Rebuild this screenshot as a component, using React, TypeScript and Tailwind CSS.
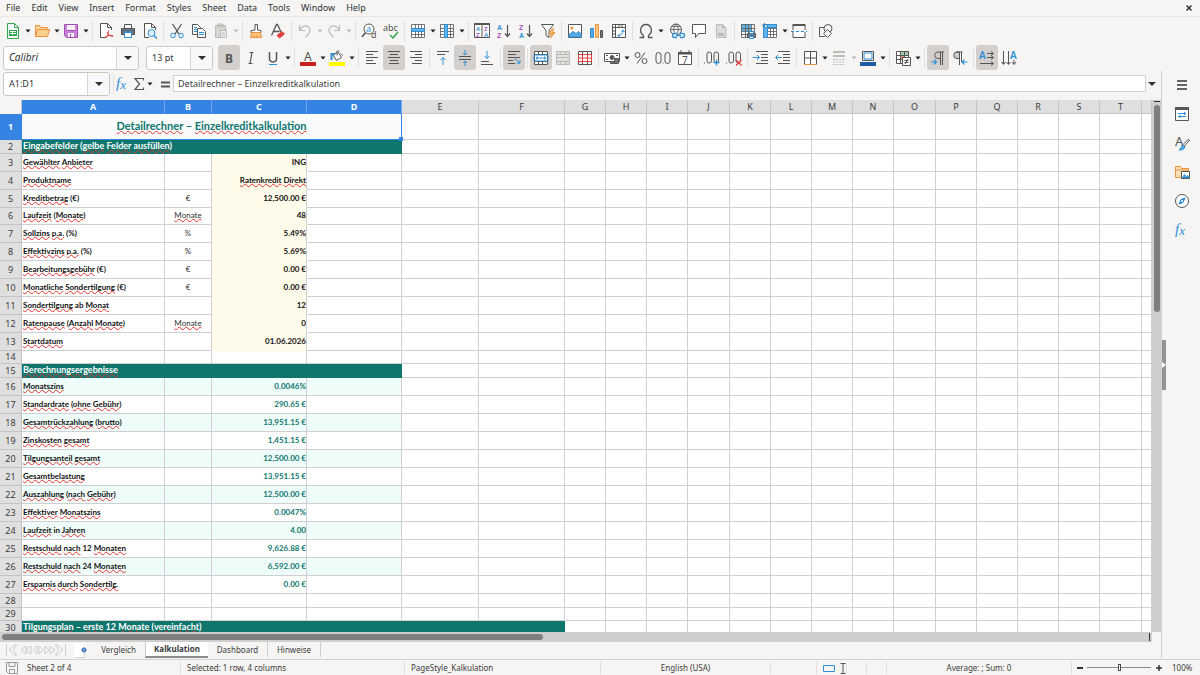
import React from "react";

type Icon = React.ReactNode;

const INK = "#555553";
const BLUE = "#2f8fd6";
const RED = "#e0413e";
const GREEN = "#2fa84f";
const ORANGE = "#ea9340";
const PURPLE = "#a24db5";
const GREY = "#bdbbb8";

const lines = (rows: number[][]) => rows.map(([x1, x2, y], i) => <path key={i} d={`M${x1} ${y}H${x2}`} />);

const sheetGrid = (color: string) => (
  <path stroke={color} strokeWidth="0.8" d="M1.5 1.5h13v13h-13zM1.5 5.5h13M1.5 8.5h13M1.5 11.5h13M5.5 1.5v13M8.5 1.5v13M11.5 1.5v13" />
);

const glyph = (text: string, x: number, y: number, size: number, fill = INK, extra = {}) => (
  <text x={x} y={y} fontSize={size} fill={fill} stroke="none" fontFamily="Noto Sans, sans-serif" {...extra}>
    {text}
  </text>
);

const letter = (text: string, x: number, y: number, size: number, fill: string) =>
  glyph(text, x, y, size, fill, { fontFamily: "Liberation Sans, sans-serif", fontWeight: 700 });

const serifFx = (
  <text x="1" y="12" fontSize="15" fill={BLUE} stroke="none" fontStyle="italic" fontFamily="Liberation Serif, serif">
    f<tspan fontSize="13" dy="1">x</tspan>
  </text>
);

const icons: Record<string, Icon> = {
  new: (
    <>
      <path fill="#fff" stroke={GREEN} d="M2.5.5h7l4 4v11h-11zM9.5.5v4h4" />
      <path fill={GREEN} stroke="none" d="M4 7h8v6H4z" />
      <path stroke="#fff" d="M5 8.5h6M5 10.5h6M7.500 8v4" />
    </>
  ),
  open: (
    <>
      <path fill="#f9d39c" stroke={ORANGE} d="M1.5 13.5v-11h4l1 2h7v3" />
      <path fill="#fbcf8e" stroke={ORANGE} d="M1.5 13.5l2-7h12l-2 7z" />
    </>
  ),
  save: (
    <>
      <path fill="#c884d4" stroke={PURPLE} d="M1.5 1.5h13v13h-11l-2-2z" />
      <path fill="#f7eff9" stroke="none" d="M4 2h8v5H4zM5 10h6v4H5z" />
      <path stroke={PURPLE} d="M4 7.5h8M7.5 11v3" />
    </>
  ),
  pdf: (
    <>
      <path fill="#fff" d="M13.500 7V4.500L9.500.5h-7v14h6M9.500.5v4h4" />
      <path stroke={RED} d="M7 15c3-2 4-5 3.500-7.500M9 9c1 3 3 4 6 4.500M7 14c3-1.500 5-2 8-1.500" />
    </>
  ),
  print: (
    <>
      <path fill="#fff" d="M4.500 5.500v-4h7v4" />
      <path fill="#66727b" d="M1.500 5.500h13v6h-13z" />
      <path fill="#fff" stroke={BLUE} d="M4.500 9.500h7v5h-7z" />
      <path stroke="#3b85ba" d="M4 8h8" />
    </>
  ),
  preview: (
    <>
      <path fill="#fff" d="M7 14.500H2.500V.5h7l4 4V7M9.500.5v4h4" />
      <circle cx="9.500" cy="10" r="3.500" fill="#d9ecfa" stroke={BLUE} />
      <path stroke={BLUE} strokeWidth="1.500" d="M12 12.500l3 3" />
    </>
  ),
  cut: (
    <>
      <path strokeWidth="1.300" d="M3.500 1l6.500 10M12.500 1L6 11" />
      <circle cx="4" cy="12.500" r="2.300" stroke={BLUE} />
      <circle cx="12" cy="12.500" r="2.300" stroke={BLUE} />
    </>
  ),
  copy: (
    <>
      <path fill="#fff" d="M1.500 1.500h5l3 3v7h-8z" />
      <path fill="#fff" d="M6.500 5.500h5l3 3v6h-8z" />
      <path stroke={BLUE} d="M3 4.500h3M3 6.500h3M3 8.500h3M8 9.500h5M8 11.500h5" />
    </>
  ),
  paste: (
    <>
      <path fill="#d8d6d4" stroke={GREY} d="M2.500 2.500h10v12h-10zM5 1h5v3H5z" />
      <path fill="#eee" stroke={GREY} d="M7.500 7.500h6v7h-6zM9 10h3M9 12h3" />
    </>
  ),
  clone: (
    <>
      <path fill="#fff" d="M7 7V1.500h2.500V7l3.500.5v2H3v-2z" />
      <path fill="#fbc77c" stroke={ORANGE} d="M3.500 9.500h9l1 5h-11zM6 12v2M9 12v2" />
    </>
  ),
  clear: (
    <>
      <path strokeWidth="1.300" d="M1.500 12.500L6.500 1.500h1L11 9M3.500 8.500h6" />
      <path fill={RED} stroke={RED} d="M7 12.500l5-4 2.500 2.500-5 4z" />
    </>
  ),
  undo: <path stroke={GREY} strokeWidth="1.200" d="M2.500 2v5.500H8M2.500 7.500C5 2.500 10 1.500 12.500 5c2 3.500-1 6.500-4 9" />,
  redo: <path stroke={GREY} strokeWidth="1.200" d="M13.500 2v5.500H8M13.500 7.500C11 2.500 6 1.500 3.500 5c-2 3.500 1 6.500 4 9" />,
  find: (
    <>
      <circle cx="8" cy="6" r="5" fill="#fff" />
      <path strokeWidth="1.500" d="M4.500 9.500L1 14" />
      {glyph("a", 5, 8.500, 9, BLUE)}
      {glyph("d", 10, 15, 9)}
    </>
  ),
  spell: (
    <>
      {glyph("abc", 0, 8, 9)}
      <path stroke={GREEN} strokeWidth="1.500" d="M7 12l3 3 5-6" />
    </>
  ),
  row: (
    <>
      <path fill="#fff" d="M1.500 1.500h13v13h-13z" stroke="none" />
      {sheetGrid(INK)}
      <path fill="#64b3ea" stroke={BLUE} d="M1.500 5.500h13v3h-13z" />
    </>
  ),
  col: (
    <>
      <path fill="#fff" d="M1.500 1.500h13v13h-13z" stroke="none" />
      {sheetGrid(INK)}
      <path fill="#64b3ea" stroke={BLUE} d="M5.500 1.500h3v13h-3z" />
    </>
  ),
  sort: (
    <>
      <path fill="#fff" d="M.5 1.500h15v13H.5zM8 1v13" />
      <path fill={INK} d="M.5.500h15v1H.5z" />
      {letter("A", 2, 7.500, 6, BLUE)}
      {letter("Z", 2, 14, 6, PURPLE)}
      {letter("Z", 10, 7.500, 6, PURPLE)}
      {letter("A", 10, 14, 6, BLUE)}
    </>
  ),
  az: (
    <>
      {letter("A", 1, 6.500, 7, BLUE)}
      {letter("Z", 1, 15, 7, PURPLE)}
      <path strokeWidth="1.200" d="M11.500 2v11M9 10.500l2.500 3 2.500-3" />
    </>
  ),
  za: (
    <>
      {letter("Z", 1, 6.500, 7, PURPLE)}
      {letter("A", 1, 15, 7, BLUE)}
      <path strokeWidth="1.200" d="M11.500 2v11M9 10.500l2.500 3 2.500-3" />
    </>
  ),
  filter: (
    <>
      <path fill="#fff" d="M1.500 1.500h12l-4.500 6v7l-3-2v-5z" />
      <path fill="#fbc77c" stroke={ORANGE} d="M12 6l-3 5h3l-1.500 4L15 9.500h-3L14 6z" />
    </>
  ),
  image: (
    <>
      <path fill="#fff" d="M1.500 1.500h13v13h-13z" />
      <path fill="#58a9e2" stroke={BLUE} d="M2 14v-2.500l4-3 3 2 2.500-2 3 3V14z" />
      <circle cx="5" cy="5" r="1.500" fill={ORANGE} stroke="none" />
    </>
  ),
  chart: (
    <>
      <path fill="#58a9e2" stroke={BLUE} d="M1.500 5.500h3v9h-3z" />
      <path fill="#fbc77c" stroke={ORANGE} d="M6.500 1.500h3v13h-3z" />
      <path fill="#77746f" d="M11.500 7.500h2v7h-2z" />
    </>
  ),
  pivot: (
    <>
      <path fill="#fff" d="M1.500 1.500h13v13h-13zM1.500 4.500h13M4.500 1.500v13M8 1.500v3M11 1.500v3M1.500 8h3M1.500 11h3" />
      <path stroke={BLUE} d="M7 12.500c3 0 5-2 5-5M10.500 9L12 7l1.500 2M8.500 11L7 12.500 8.500 14" />
    </>
  ),
  omega: <path strokeWidth="1.300" d="M1.500 14.500h4v-2C.5 9 2.500 1.500 8 1.500S15.500 9 10.500 12.500v2h4" />,
  link: (
    <>
      <circle cx="7" cy="6.500" r="5.500" />
      <path strokeWidth="0.800" d="M1.500 6.500h11M7 1c-3 3-3 8 0 11M7 1c3 3 3 8 0 11M2.500 3.500h9" />
      <path fill="#f6f5f4" stroke={BLUE} strokeWidth="1.300" d="M8 10.500H5.500a2 2 0 000 4H8M11 10.500h2.500a2 2 0 010 4H11M7 12.500h5" />
    </>
  ),
  comment: <path fill="#fff" d="M1.500 1.500h13v9h-7l-3 4v-4h-3z" />,
  header: (
    <>
      <path fill="#dedcda" stroke={GREY} d="M3.500 1.500h6l3.500 3.500v9.500H3.500z" />
      <path fill={GREY} stroke="none" d="M5 10h6v3H5zM9 1.500L13 5H9z" />
    </>
  ),
  printArea: (
    <>
      <path fill="#64b3ea" stroke="none" d="M1 1h10v7H1z" />
      {sheetGrid(INK)}
      <path fill="#6c7880" d="M7.500 10.500h8v4h-8z" />
      <path fill="#fff" stroke={BLUE} d="M9.500 8.500h4v2h-4zM9.500 13.500h4v2h-4z" />
    </>
  ),
  freeze: (
    <>
      <path fill="#fff" stroke="none" d="M2 1h13v13H2z" />
      {sheetGrid(INK)}
      <path fill="#64b3ea" stroke={BLUE} d="M1.500 4.500h4v10h-4zM5.500 1.500h9v3h-9z" />
      <path stroke={BLUE} d="M0 2h5M2.500 0v5" />
    </>
  ),
  split: (
    <>
      <path fill="#fff" d="M2 1.500h12V7M2 1.500V7M2 9v5.500h12V9" />
      <path fill={INK} d="M2 1.500h12v1H2z" />
      <path stroke={BLUE} strokeDasharray="3 2" d="M0 8.500h16" />
    </>
  ),
  shapes: (
    <>
      <path d="M7 13.500H1.500v-9H6" />
      <circle cx="10" cy="5.500" r="4" />
      <path fill="#f6f5f4" d="M9.500 6.500l4 4-4 4-4-4z" />
    </>
  ),
  bold: glyph("B", 4, 13, 12, INK, { fontWeight: 700 }),
  italic: <path strokeWidth="1.200" d="M6.500 2.500h4M5.500 13.500h4M9 2.500l-2 11" />,
  underline: (
    <>
      <path strokeWidth="1.500" d="M4.500 2v6.500c0 4.500 7 4.500 7 0V2" />
      <path stroke={BLUE} d="M4 14.500h8" />
    </>
  ),
  fontColor: (
    <>
      {glyph("A", 4, 11, 12, INK)}
      <path fill="#c9211e" stroke="none" d="M0 12h16v4H0z" />
    </>
  ),
  highlight: (
    <>
      <path fill="#ff0" stroke="none" d="M0 12h16v4H0z" />
      <path fill="#fff" d="M4 5l5-3 3.500 5.500-5 3z" />
      <path d="M8 5.500V1.500c0-1 2-1 2 0M12 3.500l1.500 2" />
      <path stroke={BLUE} strokeWidth="2" d="M2.500 10V4H6" />
    </>
  ),
  alignLeft: <>{lines([[2, 14, 1.5], [2, 9, 4.5], [2, 14, 7.5], [2, 9, 10.5], [2, 12, 13.5]])}</>,
  alignCenter: <>{lines([[2, 14, 1.5], [4, 12, 4.5], [2, 14, 7.5], [4, 12, 10.5], [3, 13, 13.5]])}</>,
  alignRight: <>{lines([[2, 14, 1.5], [7, 14, 4.5], [2, 14, 7.5], [7, 14, 10.5], [4, 14, 13.5]])}</>,
  top: (
    <>
      {lines([[2, 14, 1.5], [2, 10, 4.5]])}
      <path stroke={BLUE} d="M8 15V7.500M5.500 10L8 7.500l2.500 2.500" />
    </>
  ),
  middle: (
    <>
      {lines([[2, 14, 6.5], [2, 14, 9.5]])}
      <path stroke={BLUE} d="M8 0v5M6 3l2 2 2-2M8 16v-5M6 13l2-2 2 2" />
    </>
  ),
  bottom: (
    <>
      {lines([[2, 10, 11.5], [2, 14, 14.5]])}
      <path stroke={BLUE} d="M8 1v7.500M5.500 6L8 8.500 10.500 6" />
    </>
  ),
  wrap: (
    <>
      {lines([[2, 14, 1.5], [2, 10, 4.5], [2, 14, 7.5], [2, 7, 10.5], [2, 9, 13.5]])}
      <path stroke={BLUE} d="M8 9.500c3 0 4 1 5.500 4M10.500 13h3.500v-3" />
    </>
  ),
  merge: (
    <>
      <path fill="#fff" d="M1.500 1.500h13v13h-13zM1.500 4.500h13M1.500 11.500h13M5.500 1.500v3M9.500 1.500v3M5.500 11.500v3M9.500 11.500v3" />
      <path stroke={BLUE} d="M1 5h14v6H1zM3 8h10M5 6.500L3 8l2 1.500M11 6.500L13 8l-2 1.500" />
    </>
  ),
  mergeOff: (
    <path fill="#e3e1df" stroke={GREY} d="M1.500 1.500h13v13h-13zM1.500 4.500h13M1.500 7.500h13M1.500 11.500h13M5.500 1.500v3M10.500 1.500v3M5.500 11.500v3M10.500 11.500v3" />
  ),
  unmerge: (
    <>
      <path fill="#fff" d="M1.500 1.500h13v13h-13zM5.500 1.500v3M10.500 1.500v3M5.500 11.500v3M10.500 11.500v3" />
      <path stroke={RED} d="M1.500 4.500h13v7h-13zM5.500 4.500v7M10.500 4.500v7M1.500 8h13" />
    </>
  ),
  currency: (
    <>
      <path fill="#fff" d="M.5 3.500h15v8H.5z" />
      <circle cx="8" cy="7.500" r="2" fill={INK} />
      <path d="M2 5.500h2M12 5.500h2M2 9.500h2" />
      <path fill="#77746f" d="M10.500 8.500h4v5h-4zM6.500 11.500h4v2h-4z" />
    </>
  ),
  percent: (
    <>
      <circle cx="4.500" cy="5" r="2.500" />
      <circle cx="11.500" cy="11" r="2.500" />
      <path d="M12 2.500l-8 11" />
    </>
  ),
  number: (
    <>
      <rect x="1" y="2.500" width="5" height="11" rx="2.500" />
      <rect x="10" y="2.500" width="5" height="11" rx="2.500" />
      <path d="M8 12.500v1" />
    </>
  ),
  date: (
    <>
      <path fill="#fff" d="M1.500 2.500h13v12h-13z" />
      <path fill={INK} d="M1.500 2.500h13v1.500h-13zM4 0v3M12 0v3" />
      {glyph("7", 5, 13.500, 10)}
    </>
  ),
  addDecimal: (
    <>
      <path d="M.5 12.500v1" />
      <rect x="3" y="2" width="4.500" height="11" rx="2.200" />
      <rect x="10" y="2" width="4.500" height="11" rx="2.200" />
      <path stroke={BLUE} strokeWidth="1.300" d="M9.500 12.500h6M12.500 9.500v6" />
    </>
  ),
  delDecimal: (
    <>
      <path d="M.5 12.500v1" />
      <rect x="3" y="2" width="4.500" height="11" rx="2.200" />
      <rect x="10" y="2" width="4.500" height="11" rx="2.200" />
      <path stroke={RED} strokeWidth="1.300" d="M10 10l5.500 5.500M15.500 10L10 15.500" />
    </>
  ),
  indent: (
    <>
      {lines([[3, 15, 1.5], [8, 15, 4.5], [8, 15, 7.5], [8, 15, 10.5], [3, 15, 13.5]])}
      <path stroke={BLUE} d="M0 7.500h6.500M4 5l2.500 2.500L4 10" />
    </>
  ),
  outdent: (
    <>
      {lines([[3, 15, 1.5], [8, 15, 4.5], [8, 15, 7.5], [8, 15, 10.5], [3, 15, 13.5]])}
      <path stroke={BLUE} d="M7 7.500H.5M3 5L.5 7.500 3 10" />
    </>
  ),
  borders: (
    <>
      <path fill="#fff" d="M2.500 1.500h12v13h-12zM2.500 8h12M8.500 1.500v13" />
      <path stroke={ORANGE} d="M2 14.500h13" />
    </>
  ),
  lineStyle: (
    <>
      <path stroke={GREY} strokeWidth="2" d="M2 2h12M2 6h12" />
      <path stroke={GREY} strokeDasharray="2 1" d="M2 9.500h12M2 12h12M2 14.500h12" />
    </>
  ),
  lineColor: (
    <>
      <path fill="#fff" d="M2.500 1.500h11v9h-11z" />
      <path stroke={BLUE} d="M4 3h8v6H4z" />
      <path fill="#1f5da8" stroke="none" d="M0 12h16v4H0z" />
    </>
  ),
  condFormat: (
    <>
      <path fill="#fff" stroke="none" d="M1 1h13v13H1z" />
      <path fill="#9bd3a4" stroke="none" d="M5 1h9v4H5z" />
      <path fill="#ee8581" stroke="none" d="M5 5h5v4H5z" />
      <path d="M1.500 1.500h12v12h-12zM1.500 5.500h12M1.500 9.500h12M5.500 1.500v12M9.500 1.500v12" />
      <path fill="#fff" d="M7.500 7.500h8v8h-8zM9.500 10.500h4M9.500 12.500h4M13 9l-3 5" />
    </>
  ),
  ltr: (
    <>
      <path d="M14 2H8a3 3 0 000 6.500h2M10.500 2v13M12.500 2v13" />
      <path stroke={BLUE} strokeWidth="1.200" d="M1 12h5.500M4 9.500L6.500 12 4 14.500" />
    </>
  ),
  rtl: (
    <>
      <path fill="#cfcdca" d="M8 2H5a3 3 0 000 6.500h2" />
      <path d="M4 2h6.500M7.500 2v13M9.500 2v10" />
      <path stroke={BLUE} strokeWidth="1.200" d="M15.500 12H10M12.500 9.500L10 12l2.500 2.500" />
    </>
  ),
  textHoriz: (
    <>
      {glyph("A", 0, 9, 10, BLUE, { fontWeight: 600 })}
      <path d="M8 3.500h6M8 7.500h6M1 13.500h13M12 1.500l2.500 2-2.500 2M12 5.500l2.500 2-2.500 2M12 11.500l2.500 2-2.500 2" />
    </>
  ),
  textVert: (
    <>
      {glyph("A", 9, 9, 10, BLUE, { fontWeight: 600 })}
      <path d="M2.500 1v13M7.500 1v13M13 10v4M.5 12l2 2.500 2-2.500M5.500 12l2 2.500 2-2.500M11 12l2 2.500 2-2.500" />
    </>
  ),
  fx: serifFx,
  sigma: <path strokeWidth="1.200" d="M12.500 4.500v-2H4l4.500 5.500L4 13.500h8.500v-2" />,
  equals: <path strokeWidth="1.800" d="M4 6.500h9M4 10.500h9" />,
  menu: <path stroke="#2e3436" strokeWidth="1.500" d="M3 4h10M3 8h10M3 12h10" />,
  properties: (
    <>
      <path fill="#fff" d="M1.500 1.500h13v13h-13z" />
      <path fill={INK} d="M1.500 1.500h13v2h-13z" />
      <path stroke={BLUE} d="M4 7.500h8M4 10.500h8M10.500 6v3M6 9v3" />
    </>
  ),
  stylesPane: (
    <>
      {glyph("A", 1, 11, 13)}
      <path fill="#fff" d="M15.500 5l-5 6-1.500-1.500L14 4.500z" />
      <path fill="#58a9e2" stroke={BLUE} d="M9 10l2 2c-1 3-4 3-6 3 2-1 2-4 4-5z" />
    </>
  ),
  gallery: (
    <>
      <path fill="#fbe0b8" stroke={ORANGE} d="M1.500 13.500v-11h5l1 2h7v9zM1.500 6h13" />
      <path fill="#fff" d="M7.500 7.500h8v7h-8z" />
      <path fill="#58a9e2" stroke={BLUE} d="M8.500 13.500l2-3 2 2 1-1 1.500 2z" />
    </>
  ),
  navigator: (
    <>
      <circle cx="8" cy="8" r="6.500" fill="#fff" />
      <path fill={BLUE} stroke={BLUE} d="M11 5L9 9.500 5 11l2-4.500z" />
      <circle cx="8" cy="8" r="1" fill="#fff" stroke="none" />
    </>
  ),
  saved: <path stroke="#9a9996" d="M2.500 2.500h11v11h-9l-2-2zM5 2.500v4h6v-4M5.500 13.500v-4h5v4" />,
  addSheet: (
    <>
      <path fill="#fff" stroke="none" d="M1 1h10v14H1z" />
      <path stroke="#d5d3d0" d="M11.500 11v4.500H2" />
      <circle cx="11" cy="8" r="2" fill="#fff" stroke="#2a62b8" />
      <path stroke="#2a62b8" strokeWidth="0.800" d="M11 5.500v5M8.500 8h5" />
    </>
  ),
  selection: <path stroke={BLUE} d="M2.500 5.500h11v6h-11z" />,
  cursor: <path stroke={INK} d="M3.500 3.500h5M3.500 13.500h5M6 3.500v10" />,
};

function Glyph({ name }: { name: string }) {
  return (
    <svg viewBox="0 0 16 16" className="size-4 shrink-0 overflow-visible" fill="none" stroke={INK} aria-hidden="true">
      {icons[name]}
    </svg>
  );
}

function Caret({ faded = false }: { faded?: boolean }) {
  return (
    <svg viewBox="0 0 6 4" className="h-1 w-1.5" fill={faded ? GREY : "#1c1c1c"} aria-hidden="true">
      <path d="M.5.500h5L3 3.500z" />
    </svg>
  );
}

// "|" is a separator, "_" a small gap, a trailing "*" marks a toggled button, "+" a drop-down, "-" a disabled drop-down
const STANDARD_BAR = "new+ open+ save+ | pdf print preview | cut copy paste- | clone clear | undo- redo- | find spell | row+ col+ | sort az za filter | image chart pivot | omega+ _ link comment header | printArea freeze+ split | shapes";
const FORMAT_BAR = "bold* italic underline+ | fontColor+ highlight+ | alignLeft alignCenter* alignRight | top middle* bottom | wrap* | merge* mergeOff unmerge | currency+ percent number date | addDecimal delDecimal | indent outdent | borders+ lineStyle- lineColor+ | condFormat+ | ltr* rtl | textHoriz* textVert";

function Tools({ spec }: { spec: string }) {
  const items = spec.split(" ");
  return (
    <>
      {items.map((item, i) => {
        if (item === "_") return <span key={i} className="w-0.5 shrink-0" />;
        if (item === "|") {
          const wide = /[+-]$/.test(items[i - 1]);
          return (
            <span key={i} className={`flex h-5 shrink-0 justify-center ${wide ? "w-1.5" : "w-[5px]"}`}>
              <span className="w-px bg-[#e2e0de]" />
            </span>
          );
        }
        const name = item.replace(/[*+-]$/, "");
        const active = item.endsWith("*");
        return (
          <span key={i} className="flex shrink-0">
            <button
              aria-label={name}
              aria-pressed={active}
              className={`flex h-[25px] w-[22px] items-center justify-center rounded-[3px] ${active ? "bg-[#d2cfcc]" : ""}`}
            >
              <Glyph name={name} />
            </button>
            {/[+-]$/.test(item) && (
              <button aria-label={`${name} options`} className="flex w-[7px] items-center justify-center">
                <Caret faded={item.endsWith("-")} />
              </button>
            )}
          </span>
        );
      })}
    </>
  );
}

function Combo({ label, value, className = "", inputClass = "" }: { label: string; value: string; className?: string; inputClass?: string }) {
  return (
    <div className={`flex h-6 shrink-0 overflow-hidden rounded-[3px] border border-[#cdc7c2] bg-white ${className}`}>
      <input aria-label={label} defaultValue={value} className={`min-w-0 flex-1 px-[5px] outline-none ${inputClass}`} />
      <button aria-label={`${label} list`} className="flex w-[22px] items-center justify-center border-l border-[#d8d4d0] bg-[#f9f8f8]">
        <svg viewBox="0 0 8 4" className="h-1 w-2" fill="#2e3436" aria-hidden="true">
          <path d="M0 0h8L4 4z" />
        </svg>
      </button>
    </div>
  );
}

const MENUS = ["File", "Edit", "View", "Insert", "Format", "Styles", "Sheet", "Data", "Tools", "Window", "Help"];

const COLUMNS: [string, string][] = [
  ["A", "w-[143px]"], ["B", "w-[47px]"], ["C", "w-[95px]"], ["D", "w-[95px]"], ["E", "w-[77px]"], ["F", "w-[86px]"],
  ["G", "w-[41px]"], ["H", "w-[41px]"], ["I", "w-[41px]"], ["J", "w-[42px]"], ["K", "w-[41px]"], ["L", "w-[41px]"],
  ["M", "w-[41px]"], ["N", "w-[41px]"], ["O", "w-[42px]"], ["P", "w-[41px]"], ["Q", "w-[41px]"], ["R", "w-[41px]"],
  ["S", "w-[41px]"], ["T", "w-[42px]"], ["", ""],
];

type Row = { kind: "title" | "band" | "input" | "result" | "empty"; label?: string; unit?: string; value?: string; height: string; span?: number };

const input = (label: string, value: string, unit = "", height = "h-[18px]"): Row => ({ kind: "input", label, value, unit, height });
const result = (label: string, value: string): Row => ({ kind: "result", label, value, height: "h-[18px]" });

const ROWS: Row[] = [
  { kind: "title", label: "Detailrechner – Einzelkreditkalkulation", height: "h-[26px]", span: 4 },
  { kind: "band", label: "Eingabefelder (gelbe Felder ausfüllen)", height: "h-[14px]", span: 4 },
  input("Gewählter Anbieter", "ING"),
  input("Produktname", "Ratenkredit Direkt"),
  input("Kreditbetrag (€)", "12,500.00 €", "€"),
  input("Laufzeit (Monate)", "48", "Monate", "h-[17px]"),
  input("Sollzins p.a. (%)", "5.49%", "%"),
  input("Effektivzins p.a. (%)", "5.69%", "%"),
  input("Bearbeitungsgebühr (€)", "0.00 €", "€"),
  input("Monatliche Sondertilgung (€)", "0.00 €", "€"),
  input("Sondertilgung ab Monat", "12"),
  input("Ratenpause (Anzahl Monate)", "0", "Monate"),
  input("Startdatum", "01.06.2026"),
  { kind: "empty", height: "h-[13px]" },
  { kind: "band", label: "Berechnungsergebnisse", height: "h-[14px]", span: 4 },
  result("Monatszins", "0.0046%"),
  result("Standardrate (ohne Gebühr)", "290.65 €"),
  result("Gesamtrückzahlung (brutto)", "13,951.15 €"),
  result("Zinskosten gesamt", "1,451.15 €"),
  result("Tilgungsanteil gesamt", "12,500.00 €"),
  result("Gesamtbelastung", "13,951.15 €"),
  result("Auszahlung (nach Gebühr)", "12,500.00 €"),
  result("Effektiver Monatszins", "0.0047%"),
  result("Laufzeit in Jahren", "4.00"),
  result("Restschuld nach 12 Monaten", "9,626.88 €"),
  result("Restschuld nach 24 Monaten", "6,592.00 €"),
  result("Ersparnis durch Sondertilg.", "0.00 €"),
  { kind: "empty", height: "h-[14px]" },
  { kind: "empty", height: "h-[13px]" },
  { kind: "band", label: "Tilgungsplan – erste 12 Monate (vereinfacht)", height: "h-[14px]", span: 6 },
];

// Red wavy line under every word the spell checker does not know
function Spelled({ text }: { text: string }) {
  return (
    <>
      {text.split(/([\p{L}.]{3,})/u).map((part, i) =>
        i % 2 && part !== "ING" ? (
          <span key={i} className="underline decoration-[#e5322d] decoration-wavy decoration-1 underline-offset-0 [text-decoration-skip-ink:none]">
            {part}
          </span>
        ) : (
          part
        ),
      )}
    </>
  );
}

const CELL = "overflow-hidden whitespace-nowrap border-r border-b border-[#d0d0d0] p-0";
const DATA = "pb-0.5 font-[Lato] text-[8px] leading-3";

function SheetRow({ row, index }: { row: Row; index: number }) {
  const n = index + 1;
  const rest = COLUMNS.slice(row.span ?? 4);
  const mint = row.kind === "result" && n % 2 === 0 ? "bg-[#eefdfa]" : "";
  return (
    <tr className={row.height}>
      <th
        scope="row"
        className={`border-r border-b p-0 text-[9px] leading-3 ${n === 1 ? "border-[#3584e4] bg-[#3584e4] font-bold text-white" : "border-[#c4c4c4] bg-[#dfdfdf] font-normal text-[#3b3b3b]"}`}
      >
        {n}
      </th>
      {row.kind === "title" && (
        <td colSpan={4} className="relative border-r border-b border-[#3584e4] bg-[#f8fafc] p-0 pb-0.5 text-center font-[Lato] text-[11px] leading-4 font-bold text-[#0f766e]">
          <Spelled text={row.label!} />
          <span className="absolute -right-0.5 -bottom-0.5 size-1 bg-[#3584e4]" />
        </td>
      )}
      {row.kind === "band" && (
        <td colSpan={row.span} className="overflow-hidden border-r border-[#0f766e] bg-[#0f766e] p-0 pb-0.5 pl-px font-[Lato] text-[9px] leading-3 font-bold whitespace-nowrap text-white">
          <Spelled text={row.label!} />
        </td>
      )}
      {row.kind === "empty" && COLUMNS.slice(0, 4).map(([name]) => <td key={name} className={CELL} />)}
      {(row.kind === "input" || row.kind === "result") && (
        <>
          <td className={`${CELL} ${DATA} ${mint} pl-px font-bold text-[#111]`}>
            <Spelled text={row.label!} />
          </td>
          <td className={`${CELL} ${DATA} ${mint} text-center text-[#333]`}>
            <Spelled text={row.unit ?? ""} />
          </td>
          <td
            className={`${CELL} ${DATA} text-right font-bold ${row.kind === "input" ? "border-b-[#fefce8] bg-[#fffbeb] text-[#111]" : `${mint} text-[#0f766e]`}`}
          >
            <Spelled text={row.value!} />
          </td>
          <td className={`${CELL} ${mint}`} />
        </>
      )}
      {rest.map(([name]) => (
        <td key={name} className={CELL} />
      ))}
    </tr>
  );
}

function Sheet() {
  return (
    <table className="w-full table-fixed border-separate border-spacing-0 bg-white">
      <thead>
        <tr className="h-[14px]">
          <th className="w-[22px] border-r border-[#c4c4c4] bg-[#f6f5f4] p-0" />
          {COLUMNS.map(([name, width], i) => (
            <th
              key={name}
              scope="col"
              className={`${width} border-r border-b p-0 text-[9px] leading-3 ${i < 4 ? "border-[#3584e4] border-r-[#6da5ea] bg-[#3584e4] font-bold text-white" : "border-[#c4c4c4] bg-[#dfdfdf] font-normal text-[#3b3b3b]"}`}
            >
              {name}
            </th>
          ))}
        </tr>
      </thead>
      <tbody>
        {ROWS.map((row, i) => (
          <SheetRow key={i} row={row} index={i} />
        ))}
      </tbody>
    </table>
  );
}

function FormulaBar() {
  return (
    <div className="flex h-[29px] shrink-0 items-center pr-[3px] pb-1 pl-[3px]">
      <Combo label="Name Box" value="A1:D1" className="w-[107px] text-[9px]" />
      <span className="mr-px ml-[3px] h-5 w-px bg-[#e2e0de]" />
      <button aria-label="Function Wizard"><Glyph name="fx" /></button>
      <button aria-label="Select Function" className="flex items-center"><Glyph name="sigma" /><Caret /></button>
      <button aria-label="Formula" className="ml-1"><Glyph name="equals" /></button>
      <input
        aria-label="Input line"
        defaultValue="Detailrechner – Einzelkreditkalkulation"
        className="h-[17px] min-w-0 flex-1 border border-[#d4d0cc] bg-white px-1 text-[9px] text-[#3b3b3b] outline-none"
      />
      <button aria-label="Expand Formula Bar" className="flex w-3 justify-center">
        <svg viewBox="0 0 8 4" className="h-1 w-2" fill="#2e3436" aria-hidden="true">
          <path d="M0 0h8L4 4z" />
        </svg>
      </button>
    </div>
  );
}

function SheetTabs() {
  const tab = "h-[15px] text-center leading-[15px]";
  return (
    <div className="flex h-[17px] shrink-0 items-start text-[8px] text-[#3b3b3b]">
      <button aria-label="Scroll sheets" className="ml-[5px] flex">
        <svg viewBox="0 0 62 14" className="mt-px h-3.5 w-[62px]" fill="none" stroke="#cfcdca" aria-hidden="true">
          <path d="M1.500 1v12M4 7l7-6v3L8 7l3 3v3zM16 7l5-4v8zM21 7l5-4v8zM28 7l4-4v8zM34 3l4 4-4 4zM40 3l4 4-4 4zM45 3l5 4-5 4zM51 1l7 6-7 6v-3l3-3-3-3zM60.500 1v12" />
        </svg>
      </button>
      <button aria-label="Add sheet" className="ml-1.5 w-[19px]"><Glyph name="addSheet" /></button>
      <button className={`${tab} w-[53px]`}>Vergleich</button>
      <button className="h-4 w-[63px] border-b-2 border-l border-b-[#8b8b8b] border-l-[#cfcdca] bg-white text-center leading-[14px] font-bold">Kalkulation</button>
      <button className={`${tab} w-[60px] border-r border-[#cfcdca]`}>Dashboard</button>
      <button className={`${tab} w-[53px] border-r border-[#cfcdca]`}>Hinweise</button>
    </div>
  );
}

function StatusBar() {
  const cell = "flex h-3 items-center border-l border-[#e0dedb]";
  return (
    <footer className="flex h-4 shrink-0 items-center border-t border-[#d4d1ce] text-[8px] text-[#3b3b3b]">
      <span className="ml-1 w-[23px]"><Glyph name="saved" /></span>
      <span className="w-[153px]">Sheet 2 of 4</span>
      <span className={`${cell} w-56 pl-1.5`}>Selected: 1 row, 4 columns</span>
      <span className={`${cell} w-[196px] pl-1.5`}>PageStyle_Kalkulation</span>
      <span className={`${cell} w-[170px] justify-center`}>English (USA)</span>
      <span className={`${cell} w-[46px]`} />
      <span className={`${cell} w-[30px] pl-1`}><Glyph name="selection" /><Glyph name="cursor" /></span>
      <span className={`${cell} w-5`} />
      <span className={`${cell} w-5`} />
      <span className={`${cell} flex-1 justify-center`}>Average: ; Sum: 0</span>
      <span className={`${cell} w-[97px] justify-center gap-1`}>
        <button aria-label="Zoom out" className="h-0.5 w-1.5 bg-[#2e3436]" />
        <input
          type="range"
          aria-label="Zoom"
          className="h-2 w-16 appearance-none bg-transparent [&::-webkit-slider-runnable-track]:h-px [&::-webkit-slider-runnable-track]:bg-[#8b8b8b] [&::-webkit-slider-thumb]:-mt-[3px] [&::-webkit-slider-thumb]:h-[7px] [&::-webkit-slider-thumb]:w-[3px] [&::-webkit-slider-thumb]:appearance-none [&::-webkit-slider-thumb]:border [&::-webkit-slider-thumb]:border-[#4a4a48] [&::-webkit-slider-thumb]:bg-white"
        />
        <button aria-label="Zoom in">
          <svg viewBox="0 0 8 8" className="size-2" stroke="#2e3436" strokeWidth="1.500" aria-hidden="true">
            <path d="M1 4h6M4 1v6" />
          </svg>
        </button>
      </span>
      <span className="w-8 pl-1">100%</span>
    </footer>
  );
}

export default function App() {
  return (
    <div className="flex h-screen flex-col overflow-hidden bg-[#f6f5f4] font-['Noto_Sans',sans-serif] text-[#2e3436]">
      <nav className="flex h-[17px] shrink-0 items-center gap-px border-b border-[#e8e6e4] pl-px text-[9px]">
        {MENUS.map((menu) => (
          <button key={menu} className="px-[5px]">{menu}</button>
        ))}
        <button aria-label="Close" className="mr-2 ml-auto">
          <svg viewBox="0 0 6 6" className="size-1.5" stroke="#2e3436" strokeWidth="1.500" aria-hidden="true">
            <path d="M.5.5l5 5M5.500.5l-5 5" />
          </svg>
        </button>
      </nav>
      <div className="flex h-[27px] shrink-0 items-center pl-0.5">
        <Tools spec={STANDARD_BAR} />
      </div>
      <div className="flex h-[27px] shrink-0 items-center pl-[3px] text-[9px]">
        <Combo label="Font Name" value="Calibri" className="mr-[7px] w-[136px] text-[10px]" inputClass="italic" />
        <Combo label="Font Size" value="13 pt" className="mr-[5px] w-[67px]" />
        <Tools spec={FORMAT_BAR} />
      </div>
      <div className="flex min-h-0 flex-1">
        <main className="flex min-w-0 flex-1 flex-col">
          <FormulaBar />
          <div className="flex min-h-0 flex-1">
            <div className="flex min-w-0 flex-1 flex-col">
              <div className="min-h-0 flex-1 overflow-hidden">
                <Sheet />
              </div>
              <div className="flex h-2.5 shrink-0 items-center justify-between bg-[#cecece] pl-0.5">
                <div className="h-1.5 w-[47%] rounded-full bg-[#7f7f7f]" />
                <div className="mr-0.5 h-2 w-px bg-[#2e3436]" />
              </div>
            </div>
            <div className="mb-2.5 flex w-[9px] shrink-0 flex-col items-center bg-[#cecece] pt-px">
              <div className="h-px w-1.5 bg-[#2e3436]" />
              <div className="mt-[3px] h-[39%] w-1.5 rounded-full bg-[#7f7f7f]" />
            </div>
          </div>
          <SheetTabs />
        </main>
        <aside className="flex w-[39px] shrink-0 items-center border-l border-[#d0cdca]">
          <button aria-label="Hide sidebar" className="flex h-[50px] w-1 items-center bg-[#949494]">
            <svg viewBox="0 0 4 6" className="h-1.5 w-1" fill="#fff" aria-hidden="true">
              <path d="M0 0l4 3-4 3z" />
            </svg>
          </button>
          <div className="flex flex-1 flex-col items-center gap-[13px] self-start pt-1.5 pr-[3px]">
            {["menu", "properties", "stylesPane", "gallery", "navigator", "fx"].map((name) => (
              <button key={name} aria-label={name}><Glyph name={name} /></button>
            ))}
          </div>
        </aside>
      </div>
      <StatusBar />
    </div>
  );
}
